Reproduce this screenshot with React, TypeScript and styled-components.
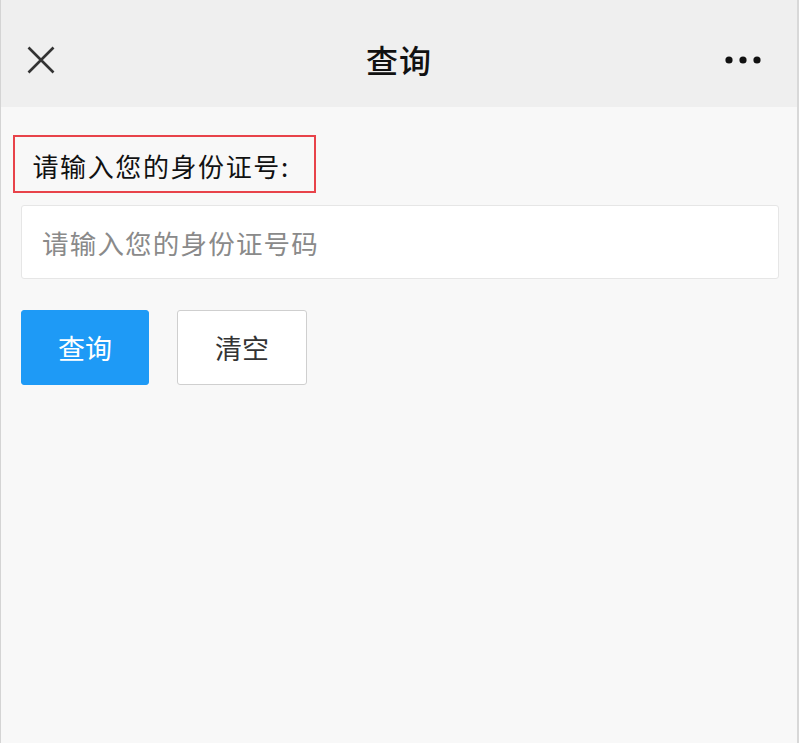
import React from "react";
import styled, { createGlobalStyle } from "styled-components";

const GlobalStyle = createGlobalStyle`
  html, body { margin: 0; padding: 0; background: #f8f8f8; }
  body { font-family: "Noto Sans CJK SC", "Noto Sans", sans-serif; }
  * { box-sizing: border-box; }
`;

const Page = styled.div`
  width: 799px;
  min-height: 743px;
  background: #f8f8f8;
  border-left: 1px solid #d4d4d4;
  border-right: 2px solid #d8d8d8;
  display: flex;
  flex-direction: column;
`;

const NavBar = styled.header`
  height: 107px;
  background: #efefef;
  display: grid;
  grid-template-columns: 130px 1fr 120px;
  align-items: center;
  padding: 12px 36px 0 26px;
`;

const IconButton = styled.button<{ $align: "start" | "end" }>`
  border: none;
  background: none;
  padding: 0;
  display: flex;
  justify-self: ${(p) => p.$align};
  align-items: center;
  cursor: pointer;
`;

const Title = styled.h1`
  margin: 0;
  text-align: center;
  font-size: 32px;
  font-weight: 500;
  color: #111;
  letter-spacing: 1px;
  line-height: 1.2;
`;

const Content = styled.main`
  display: flex;
  flex-direction: column;
  padding: 28px 20px 0 20px;
`;

const LabelBox = styled.div`
  align-self: flex-start;
  margin-left: -8px;
  height: 58px;
  width: 303px;
  border: 2.5px solid #e8434a;
  display: flex;
  align-items: center;
  padding: 3px 0 0 17.5px;
  font-size: 26px;
  letter-spacing: 1.6px;
  color: #111;
`;

const Input = styled.input`
  margin-top: 12px;
  height: 74px;
  width: 758px;
  background: #fff;
  border: 1px solid #e6e6e6;
  border-radius: 3px;
  padding: 0 20px;
  font-family: "Noto Sans CJK SC", "Noto Sans", sans-serif;
  font-size: 26.5px;
  letter-spacing: 1.2px;
  color: #333;
  outline: none;
  &::placeholder { color: #8a8a8a; }
`;

const Actions = styled.div`
  margin-top: 31px;
  display: flex;
  gap: 28px;
`;

const Button = styled.button<{ $primary?: boolean }>`
  height: 75px;
  width: ${(p) => (p.$primary ? "128px" : "130px")};
  border-radius: 3px;
  border: 1px solid ${(p) => (p.$primary ? "#1e9af6" : "#cfcfcf")};
  background: ${(p) => (p.$primary ? "#1e9af6" : "#fff")};
  color: ${(p) => (p.$primary ? "#fff" : "#333")};
  font-family: "Noto Sans CJK SC", "Noto Sans", sans-serif;
  font-size: 27px;
  display: flex;
  align-items: center;
  justify-content: center;
  padding: 0;
  cursor: pointer;
`;

const CloseIcon = () => (
  <svg width="28" height="28" viewBox="0 0 28 28">
    <path d="M1.5 1.5 L26.5 26.5 M26.5 1.5 L1.5 26.5" stroke="#333" strokeWidth="2.6" strokeLinecap="butt" />
  </svg>
);

const MoreIcon = () => (
  <svg width="36" height="10" viewBox="0 0 36 10">
    <circle cx="4" cy="5" r="3.6" fill="#111" />
    <circle cx="18" cy="5" r="3.6" fill="#111" />
    <circle cx="32" cy="5" r="3.6" fill="#111" />
  </svg>
);

export default function App() {
  return (
    <>
      <GlobalStyle />
      <Page>
        <NavBar>
          <IconButton $align="start" aria-label="关闭">
            <CloseIcon />
          </IconButton>
          <Title>查询</Title>
          <IconButton $align="end" aria-label="更多">
            <MoreIcon />
          </IconButton>
        </NavBar>
        <Content>
          <LabelBox>请输入您的身份证号:</LabelBox>
          <Input placeholder="请输入您的身份证号码" />
          <Actions>
            <Button $primary>查询</Button>
            <Button>清空</Button>
          </Actions>
        </Content>
      </Page>
    </>
  );
}
